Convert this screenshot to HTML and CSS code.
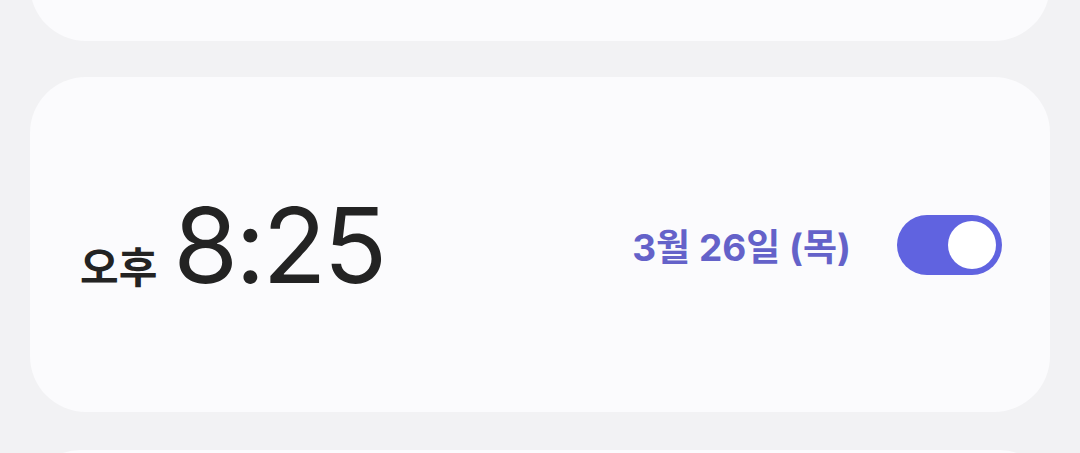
FILE: index.html
```html
<!DOCTYPE html>
<html lang="ko">
<head>
    <meta charset="UTF-8">
    <meta name="viewport" content="width=device-width, initial-scale=1.0">
    <title>알람</title>
    <link rel="stylesheet" href="styles.css">
</head>
<body>
    <div class="alarm-list">
        <div class="alarm-card alarm-card-top"></div>

        <div class="alarm-card">
            <div class="alarm-time">
                <span class="ampm">오후</span>
                <span class="clock">8:25</span>
            </div>
            <div class="alarm-side">
                <span class="alarm-date">3월 26일 (목)</span>
                <div class="switch on"><span class="knob"></span></div>
            </div>
        </div>

        <div class="alarm-card alarm-card-next"></div>
    </div>
</body>
</html>
```

FILE: styles.css
```css
body {
    margin: 0;
    background: #f2f2f4;
    font-family: Inter, "Noto Sans CJK KR", sans-serif;
    height: 453px;
    overflow: hidden;
}
.alarm-list {
    display: flex;
    flex-direction: column;
    gap: 36px;
    padding: 0 30px;
    margin-top: -159px; /* first card is scrolled mostly out of view */
}
.alarm-card {
    background: #fbfbfd;
    border-radius: 56px;
    height: 335px;
    box-sizing: border-box;
    padding: 0 48px 0 50px;
    display: flex;
    align-items: center;
    justify-content: space-between;
    flex-shrink: 0;
}
.alarm-card-top {
    height: 200px;
}
.alarm-card-next {
    height: 100px;
    margin-top: 2px;
}
.alarm-time {
    display: flex;
    align-items: baseline;
    gap: 16px;
    color: #232323;
}
.ampm {
    font-family: "Noto Sans CJK KR", sans-serif;
    font-size: 42px;
    font-weight: 600;
}
.clock {
    font-size: 105px;
    font-weight: 400;
    letter-spacing: -3px;
}
.alarm-side {
    display: flex;
    align-items: center;
    gap: 46px;
}
.alarm-date {
    font-size: 37px;
    font-weight: 700;
    color: #6462c9;
}
.switch {
    width: 105px;
    height: 60px;
    border-radius: 30px;
    background: #6063e0;
    box-sizing: border-box;
    padding: 6px;
    display: flex;
    justify-content: flex-end;
}
.knob {
    width: 48px;
    height: 48px;
    border-radius: 50%;
    background: #ffffff;
}
```
